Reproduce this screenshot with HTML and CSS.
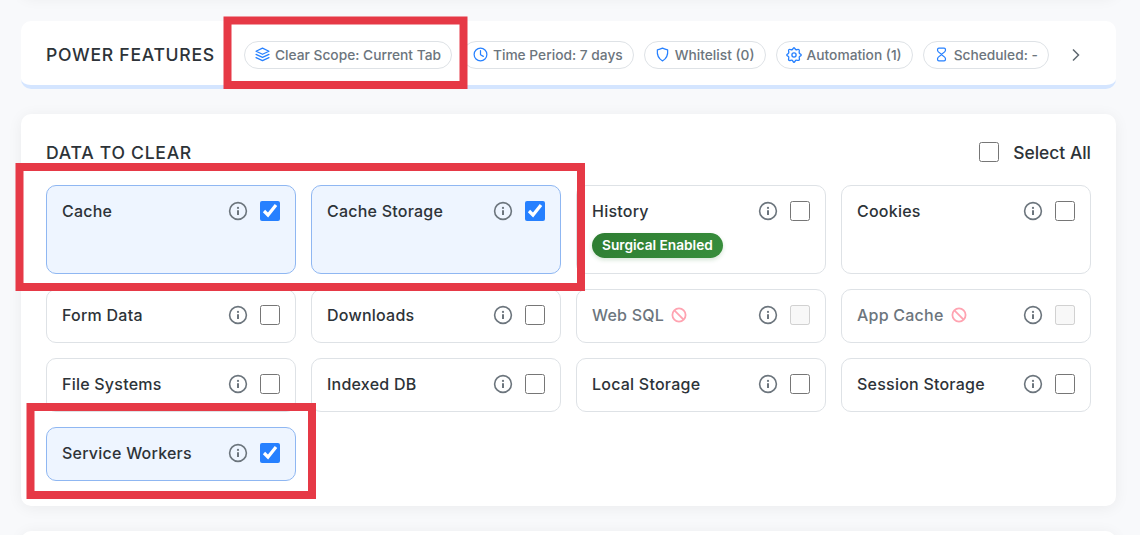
FILE: index.html
```html
<!DOCTYPE html>
<html lang="en">
<head>
<meta charset="utf-8">
<title>Clear Browsing Data</title>
<link rel="stylesheet" href="styles.css">
</head>
<body>
<svg class="defs" width="0" height="0">
  <symbol id="info" viewBox="0 0 20 20"><circle cx="10" cy="10" r="8.4" fill="none" stroke="currentColor" stroke-width="1.6"/><path d="M10 9.200v4.700" stroke="currentColor" stroke-width="2"/><circle cx="10" cy="6.900" r="1.100" fill="currentColor"/></symbol>
  <symbol id="ban" viewBox="0 0 16 16"><circle cx="8" cy="8" r="6.600"/><path d="M3.400 3.400l9.200 9.200"/></symbol>
</svg>
<main class="page">
  <section class="card card-prev"></section>

  <section class="card power">
    <h2 class="title">POWER FEATURES</h2>
    <div class="pills">
      <button class="pill"><svg class="icon" viewBox="0 0 16 16"><path d="M8 1.200l6.900 3.300L8 7.800 1.100 4.500zM1.100 7.900L8 11.100l6.900-3.200M1.100 11.300L8 14.500l6.900-3.200"/></svg>Clear Scope: Current Tab</button>
      <button class="pill"><svg class="icon" viewBox="0 0 16 16"><circle cx="8" cy="8" r="6.800"/><path d="M8 3.800V8.300l3 1.700"/></svg>Time Period: 7 days</button>
      <button class="pill"><svg class="icon" viewBox="0 0 16 16"><path d="M8 1.200C6.200 2 4.400 2.600 2.500 3.000C2 8.500 3.500 12.500 8 14.800C12.500 12.500 14 8.500 13.500 3.000C11.600 2.600 9.800 2 8 1.200z"/></svg>Whitelist (0)</button>
      <button class="pill"><svg class="icon gear" viewBox="0 0 16 16"><circle cx="8" cy="8" r="2.100"/><path d="M6.900 1.900Q8 -.4 9.100 1.900Q9.700 3.100 11.100 2.600Q13.800 1.700 13.200 4.600Q12.700 6 14.100 6.900Q16.400 8 14.100 9.100Q12.700 9.900 13.300 11.200Q14.200 13.900 11.200 13.300Q9.800 12.700 9.100 14.100Q8 16.400 6.900 14.100Q6.200 12.700 4.800 13.300Q1.800 14.200 2.700 11.200Q3.300 9.900 1.900 9.100Q-.4 8 1.900 6.900Q3.300 6 2.700 4.600Q1.900 1.700 4.800 2.600Q6.300 3.100 6.900 1.900z"/></svg>Automation (1)</button>
      <button class="pill"><svg class="icon" viewBox="0 0 16 16"><path d="M5.200 1.200h5.600q1.400 0 1.400 1.400v1.200C12.200 6 8 7 8 8s4.200 2 4.200 4.200v1.200q0 1.400-1.400 1.400H5.200q-1.400 0-1.400-1.400v-1.200C3.800 10 8 9 8 8S3.800 6 3.800 3.800V2.600q0-1.400 1.400-1.400z"/></svg>Scheduled: -</button>
    </div>
    <svg class="chevron" viewBox="0 0 16 16"><path d="M5 2.500l5.500 5.500L5 13.500"/></svg>
  </section>

  <section class="card data">
    <header class="data-head">
      <h2 class="title">DATA TO CLEAR</h2>
      <label class="select-all"><input type="checkbox" class="check">Select All</label>
    </header>
    <div class="grid">
      <div class="item on tall"><span class="label">Cache</span><svg class="info"><use href="#info"/></svg><input type="checkbox" class="check" checked></div>
      <div class="item on tall"><span class="label">Cache Storage</span><svg class="info"><use href="#info"/></svg><input type="checkbox" class="check" checked></div>
      <div class="item tall"><span class="label">History</span><svg class="info"><use href="#info"/></svg><input type="checkbox" class="check"><span class="badge">Surgical Enabled</span></div>
      <div class="item tall"><span class="label">Cookies</span><svg class="info"><use href="#info"/></svg><input type="checkbox" class="check"></div>
      <div class="item"><span class="label">Form Data</span><svg class="info"><use href="#info"/></svg><input type="checkbox" class="check"></div>
      <div class="item"><span class="label">Downloads</span><svg class="info"><use href="#info"/></svg><input type="checkbox" class="check"></div>
      <div class="item off"><span class="label">Web SQL<svg class="ban"><use href="#ban"/></svg></span><svg class="info"><use href="#info"/></svg><input type="checkbox" class="check" disabled></div>
      <div class="item off"><span class="label">App Cache<svg class="ban"><use href="#ban"/></svg></span><svg class="info"><use href="#info"/></svg><input type="checkbox" class="check" disabled></div>
      <div class="item"><span class="label">File Systems</span><svg class="info"><use href="#info"/></svg><input type="checkbox" class="check"></div>
      <div class="item"><span class="label">Indexed DB</span><svg class="info"><use href="#info"/></svg><input type="checkbox" class="check"></div>
      <div class="item"><span class="label">Local Storage</span><svg class="info"><use href="#info"/></svg><input type="checkbox" class="check"></div>
      <div class="item"><span class="label">Session Storage</span><svg class="info"><use href="#info"/></svg><input type="checkbox" class="check"></div>
      <div class="item on"><span class="label">Service Workers</span><svg class="info"><use href="#info"/></svg><input type="checkbox" class="check" checked></div>
    </div>
  </section>

  <section class="card card-next"></section>
</main>
<svg class="marks" viewBox="0 0 1140 535">
  <rect x="227.500" y="20.500" width="236" height="64.500"/>
  <rect x="19.500" y="167" width="561.500" height="120"/>
  <rect x="30.500" y="407" width="281.500" height="88"/>
</svg>
</body>
</html>
```

FILE: styles.css
```css
* { box-sizing: border-box; }
body {
  margin: 0;
  height: 535px;
  overflow: hidden;
  background: #f8f9fb;
  color: #2d3338;
  font-family: Inter, sans-serif;
}
.defs { position: absolute; }
.page {
  display: flex;
  flex-direction: column;
  gap: 25px;
  height: 535px;
  padding: 0 24px 0 21px;
  overflow: hidden;
}
.card {
  flex: none;
  background: #fff;
  border-radius: 10px;
  box-shadow: 0 2px 15px rgba(0, 0, 0, 0.06);
}
.card-prev { height: 20px; margin-top: -24px; }
.card-next { height: 60px; }
.power {
  display: flex;
  align-items: center;
  height: 68px;
  padding: 0 32px 0 25px;
  border-bottom: 4px solid #d4e5ff;
  box-shadow: none;
}
.title {
  margin: 0;
  font-size: 17.600px;
  line-height: 24px;
  font-weight: 550;
  letter-spacing: 0.720px;
  white-space: nowrap;
}
.power .title { width: 198px; padding-top: 4px; }
.pills { display: flex; gap: 10px; padding-top: 4px; }
.pill {
  display: flex;
  align-items: center;
  gap: 5px;
  height: 28px;
  padding: 0 10px 1px;
  border: 1px solid #dee2e6;
  border-radius: 14px;
  background: #fff;
  color: #6c757d;
  font: 500 13.750px Inter, sans-serif;
  white-space: nowrap;
}
.icon {
  width: 15px;
  height: 15px;
  fill: none;
  stroke: #2680ff;
  stroke-width: 1.300;
  stroke-linejoin: round;
  stroke-linecap: round;
}
.gear { width: 16px; height: 16px; margin: 0 -0.500px; }
.chevron {
  width: 16px;
  height: 16px;
  margin: 4px 0 0 auto;
  fill: none;
  stroke: #5f6870;
  stroke-width: 1.500;
}
.data { height: 392px; padding: 26px 25px 0; }
.data-head {
  display: flex;
  justify-content: space-between;
  align-items: center;
  height: 26px;
  margin-bottom: 19px;
}
.select-all {
  display: flex;
  align-items: center;
  gap: 14px;
  padding-bottom: 2px;
  font-size: 17.400px;
  font-weight: 500;
}
.check {
  width: 20px;
  height: 20px;
  margin: 0;
  accent-color: #2680ff;
}
.grid {
  display: grid;
  grid-template-columns: repeat(4, 250px);
  gap: 15px;
}
.item {
  display: flex;
  flex-wrap: wrap;
  align-items: center;
  align-content: flex-start;
  height: 54px;
  padding: 15px;
  border: 1px solid #dee2e6;
  border-radius: 10px;
}
.tall { height: 89px; }
.on { background: #eef5ff; border-color: #8fb7f2; }
.label {
  display: flex;
  flex: 1;
  align-items: center;
  font-size: 16px;
  line-height: 20px;
  font-weight: 540;
  letter-spacing: 0.230px;
  white-space: nowrap;
}
.off .label { color: #6c757d; }
.info { width: 20px; height: 20px; margin-right: 12px; color: #6c757d; }
.ban {
  width: 16px;
  height: 16px;
  margin-left: 7px;
  fill: none;
  stroke: #ffa3b1;
  stroke-width: 1.800;
}
.badge {
  height: 25px;
  margin-top: 12px;
  padding: 0 10px;
  border-radius: 13px;
  background: linear-gradient(135deg, #2e7d32, #388e3c);
  box-shadow: 0 2px 4px rgba(46, 125, 50, 0.2);
  color: #fff;
  font-size: 13.700px;
  line-height: 25px;
  font-weight: 600;
}
.marks {
  position: absolute;
  inset: 0;
  width: 1140px;
  height: 535px;
  fill: none;
  stroke: #e63946;
  stroke-width: 8;
  pointer-events: none;
}
```
